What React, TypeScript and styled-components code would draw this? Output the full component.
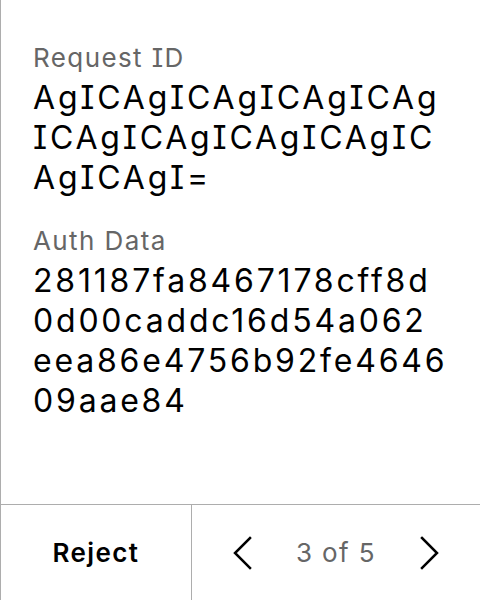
import React from "react";
import styled, { createGlobalStyle } from "styled-components";

const Global = createGlobalStyle`
  html, body { margin: 0; padding: 0; background: #fff; }
  body {
    font-family: Inter, "Noto Sans", sans-serif;
    font-feature-settings: "cv08" 1;
    -webkit-font-smoothing: antialiased;
  }
  * { box-sizing: border-box; }
`;

const Panel = styled.div`
  width: 480px;
  height: 600px;
  border-left: 1px solid #adadad;
  display: flex;
  flex-direction: column;
  background: #fff;
`;

const Body = styled.div`
  flex: 1;
  padding: 40px 32px 0 32px;
  display: flex;
  flex-direction: column;
  gap: 25px;
`;

const Field = styled.div`
  display: flex;
  flex-direction: column;
  gap: 2px;
`;

const Label = styled.div`
  font-size: 26px;
  line-height: 36px;
  letter-spacing: 1.4px;
  color: #666;
`;

const Value = styled.div`
  font-size: 32px;
  line-height: 40px;
  letter-spacing: 2.8px;
  color: #000;
`;

const ValueLine = styled.span`
  display: block;
  white-space: nowrap;
`;

const Footer = styled.div`
  height: 96px;
  border-top: 1px solid #adadad;
  display: grid;
  grid-template-columns: 191px 1fr;
`;

const RejectButton = styled.button`
  border: none;
  border-right: 1px solid #adadad;
  background: transparent;
  font-family: inherit;
  font-feature-settings: inherit;
  font-size: 26px;
  letter-spacing: 1.4px;
  font-weight: 600;
  color: #000;
  cursor: pointer;
`;

const Pager = styled.div`
  display: flex;
  align-items: center;
  justify-content: center;
  gap: 30px;
`;

const NavButton = styled.button`
  width: 48px;
  height: 48px;
  border: none;
  background: transparent;
  display: flex;
  align-items: center;
  justify-content: center;
  padding: 0;
  cursor: pointer;
`;

const Count = styled.span`
  font-size: 26px;
  letter-spacing: 1.4px;
  color: #666;
`;

const Chevron = ({ dir }: { dir: "left" | "right" }) => (
  <svg width="20" height="34" viewBox="0 0 20 34" fill="none">
    <polyline
      points={dir === "left" ? "18,2 3,17 18,32" : "2,2 17,17 2,32"}
      stroke="#000"
      strokeWidth="2.5"
      strokeLinecap="square"
      strokeLinejoin="miter"
    />
  </svg>
);

const fields = [
  {
    label: "Request ID",
    lines: ["AgICAgICAgICAgICAg", "ICAgICAgICAgICAgIC", "AgICAgI="],
  },
  {
    label: "Auth Data",
    lines: ["281187fa8467178cff8d", "0d00caddc16d54a062", "eea86e4756b92fe4646", "09aae84"],
  },
];

export default function App() {
  return (
    <>
      <Global />
      <Panel>
        <Body>
          {fields.map((f) => (
            <Field key={f.label}>
              <Label>{f.label}</Label>
              <Value>
                {f.lines.map((l, i) => (
                  <ValueLine key={i}>{l}</ValueLine>
                ))}
              </Value>
            </Field>
          ))}
        </Body>
        <Footer>
          <RejectButton>Reject</RejectButton>
          <Pager>
            <NavButton aria-label="Previous">
              <Chevron dir="left" />
            </NavButton>
            <Count>3 of 5</Count>
            <NavButton aria-label="Next">
              <Chevron dir="right" />
            </NavButton>
          </Pager>
        </Footer>
      </Panel>
    </>
  );
}
